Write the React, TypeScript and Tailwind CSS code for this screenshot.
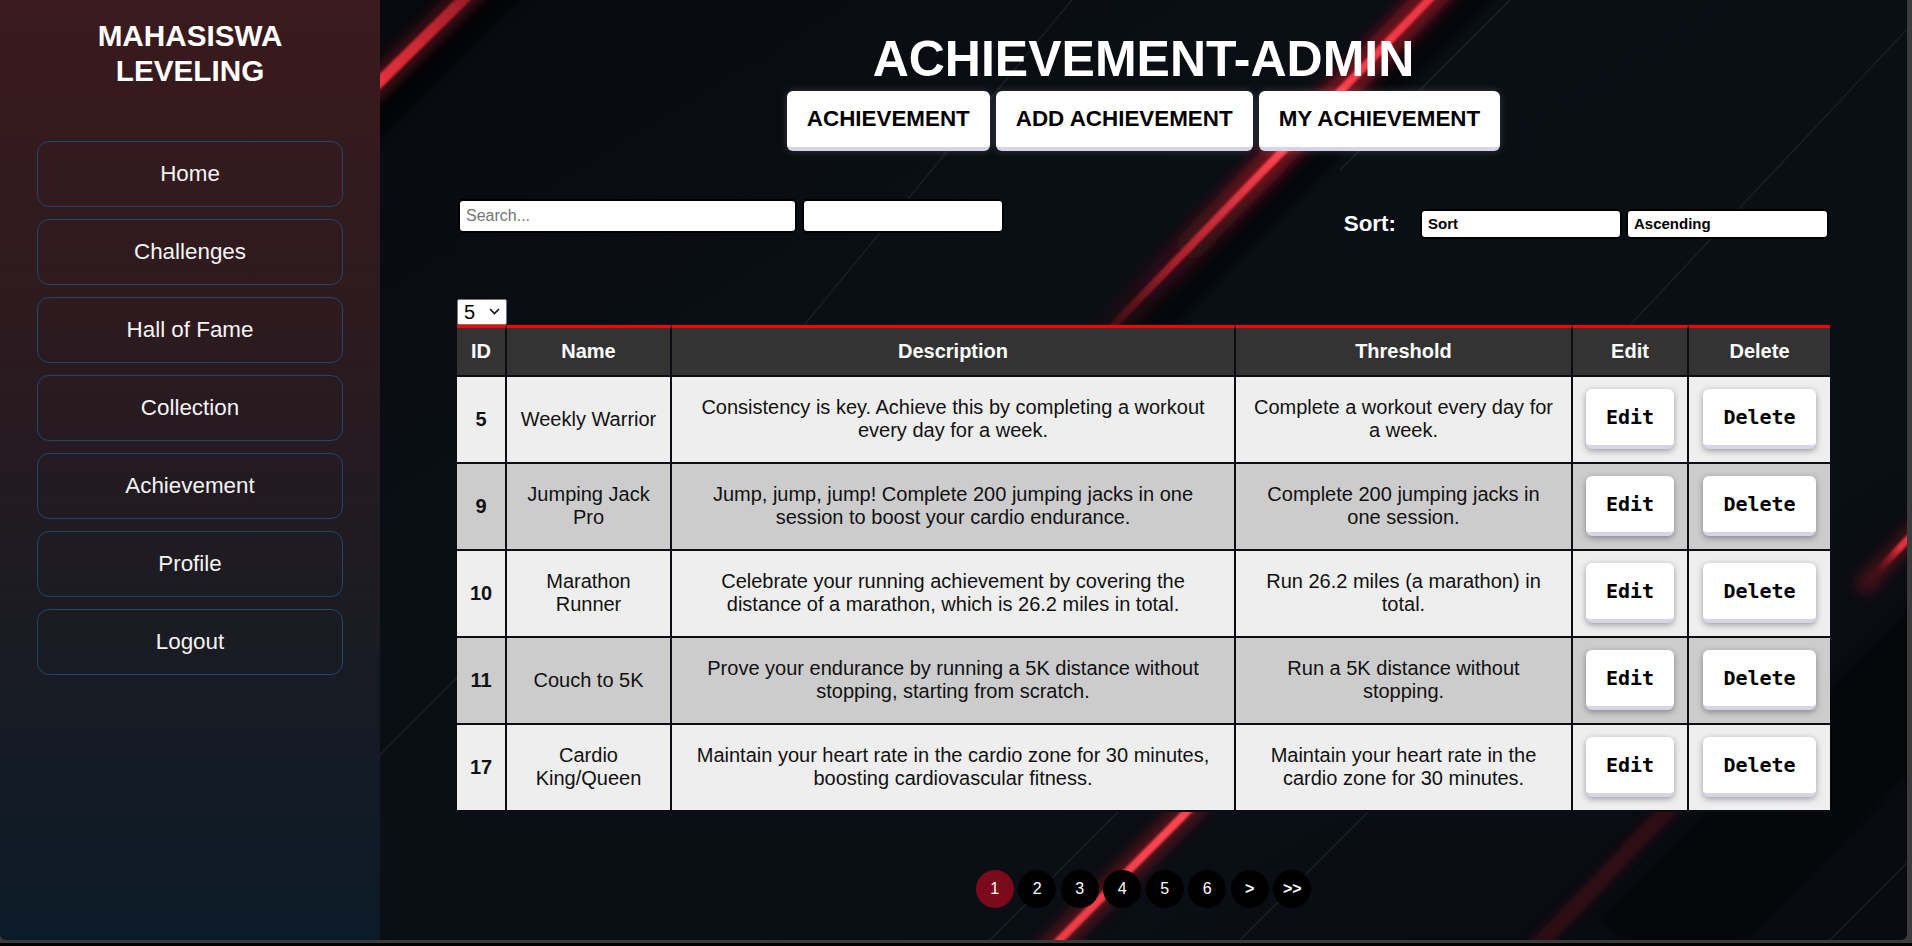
import React from "react";

type Row = { id: number; name: string; desc: string; thr: string };

const rows: Row[] = [
  {
    id: 5,
    name: "Weekly Warrior",
    desc: "Consistency is key. Achieve this by completing a workout every day for a week.",
    thr: "Complete a workout every day for a week.",
  },
  {
    id: 9,
    name: "Jumping Jack Pro",
    desc: "Jump, jump, jump! Complete 200 jumping jacks in one session to boost your cardio endurance.",
    thr: "Complete 200 jumping jacks in one session.",
  },
  {
    id: 10,
    name: "Marathon Runner",
    desc: "Celebrate your running achievement by covering the distance of a marathon, which is 26.2 miles in total.",
    thr: "Run 26.2 miles (a marathon) in total.",
  },
  {
    id: 11,
    name: "Couch to 5K",
    desc: "Prove your endurance by running a 5K distance without stopping, starting from scratch.",
    thr: "Run a 5K distance without stopping.",
  },
  {
    id: 17,
    name: "Cardio King/Queen",
    desc: "Maintain your heart rate in the cardio zone for 30 minutes, boosting cardiovascular fitness.",
    thr: "Maintain your heart rate in the cardio zone for 30 minutes.",
  },
];

const navItems = ["Home", "Challenges", "Hall of Fame", "Collection", "Achievement", "Profile", "Logout"];

function Sidebar() {
  return (
    <aside className="w-[380px] h-full shrink-0 flex flex-col items-center pt-[19px] bg-[linear-gradient(180deg,#3a1a1d_0%,#2c1a1f_35%,#1d1b22_62%,#0b1b28_100%)]">
      <h1 className="text-white font-bold text-[29.7px] leading-[34.5px] text-center">
        MAHASISWA
        <br />
        LEVELING
      </h1>
      <nav className="mt-[53px] flex flex-col gap-[12px]">
        {navItems.map((n) => (
          <a
            key={n}
            className="w-[306px] h-[66px] rounded-[12px] border border-[#21466e] flex items-center justify-center text-[22.4px] text-[#f4f4f4]"
          >
            {n}
          </a>
        ))}
      </nav>
    </aside>
  );
}

function Backdrop() {
  return (
    <svg className="absolute inset-0" width="1527" height="940" viewBox="0 0 1527 940">
      <defs>
        <filter id="glow" x="-50%" y="-50%" width="200%" height="200%">
          <feGaussianBlur stdDeviation="7" />
        </filter>
        <filter id="soft" x="-50%" y="-50%" width="200%" height="200%">
          <feGaussianBlur stdDeviation="1.2" />
        </filter>
        <filter id="wide" x="-50%" y="-50%" width="200%" height="200%">
          <feGaussianBlur stdDeviation="5" />
        </filter>
        <linearGradient id="gA" gradientUnits="userSpaceOnUse" x1="-20" y1="101" x2="100" y2="-17">
          <stop offset="0" stopColor="#f0343f" />
          <stop offset="0.45" stopColor="#d02a35" />
          <stop offset="1" stopColor="#8e1a24" />
        </linearGradient>
        <linearGradient id="gB" gradientUnits="userSpaceOnUse" x1="1068" y1="-20" x2="700" y2="360">
          <stop offset="0" stopColor="#e8343f" />
          <stop offset="0.45" stopColor="#ff4550" />
          <stop offset="0.75" stopColor="#c0242f" stopOpacity="0.8" />
          <stop offset="1" stopColor="#7a1019" stopOpacity="0" />
        </linearGradient>
        <linearGradient id="gBg" gradientUnits="userSpaceOnUse" x1="1068" y1="-20" x2="700" y2="360">
          <stop offset="0" stopColor="#a3141f" stopOpacity="0.7" />
          <stop offset="0.5" stopColor="#a3141f" stopOpacity="0.7" />
          <stop offset="1" stopColor="#5a0c12" stopOpacity="0" />
        </linearGradient>
        <linearGradient id="gC" gradientUnits="userSpaceOnUse" x1="900" y1="718" x2="620" y2="1000">
          <stop offset="0" stopColor="#e0303c" stopOpacity="0.3" />
          <stop offset="0.35" stopColor="#ff4652" />
          <stop offset="1" stopColor="#e0343f" />
        </linearGradient>
        <linearGradient id="gD" gradientUnits="userSpaceOnUse" x1="1560" y1="505" x2="1480" y2="590">
          <stop offset="0" stopColor="#ff4652" />
          <stop offset="0.5" stopColor="#e0303c" />
          <stop offset="0.8" stopColor="#a0141f" stopOpacity="0" />
        </linearGradient>
        <linearGradient id="shade" x1="0" y1="0" x2="1" y2="1">
          <stop offset="0" stopColor="#05070b" stopOpacity="0.7" />
          <stop offset="0.5" stopColor="#0c1119" stopOpacity="0" />
          <stop offset="1" stopColor="#05070a" stopOpacity="0.5" />
        </linearGradient>
      </defs>

      <rect x="0" y="0" width="1527" height="940" fill="url(#shade)" />

      {/* dark shadow bands */}
      <line x1="-10" y1="130" x2="140" y2="-20" stroke="#020305" strokeWidth="26" opacity="0.6" filter="url(#wide)" />
      <line x1="1110" y1="-20" x2="740" y2="360" stroke="#020305" strokeWidth="30" opacity="0.5" filter="url(#wide)" />
      <line x1="1600" y1="620" x2="1260" y2="960" stroke="#020305" strokeWidth="120" opacity="0.45" filter="url(#wide)" />

      {/* faint thin lines */}
      <g stroke="#ffffff" strokeOpacity="0.07" strokeWidth="1.5" fill="none">
        <line x1="700" y1="-10" x2="280" y2="500" />
        <line x1="1545" y1="10" x2="1180" y2="400" />
        <line x1="750" y1="800" x2="600" y2="950" />
        <line x1="1000" y1="800" x2="850" y2="950" />
        <line x1="1560" y1="830" x2="1440" y2="950" />
        <line x1="110" y1="645" x2="-20" y2="775" />
        <line x1="1140" y1="-10" x2="960" y2="170" />
      </g>

      {/* streak A top-left */}
      <line x1="-20" y1="101" x2="100" y2="-17" stroke="#a3141f" strokeWidth="22" opacity="0.45" filter="url(#glow)" />
      <line x1="-20" y1="101" x2="100" y2="-17" stroke="url(#gA)" strokeWidth="11" filter="url(#soft)" />

      {/* streak B main */}
      <line x1="1068" y1="-20" x2="700" y2="360" stroke="url(#gBg)" strokeWidth="30" filter="url(#glow)" />
      <line x1="1068" y1="-20" x2="700" y2="360" stroke="url(#gB)" strokeWidth="8" filter="url(#soft)" />

      {/* streak E dark red */}
      <line x1="1340" y1="755" x2="1130" y2="975" stroke="#3e1118" strokeWidth="16" opacity="0.8" filter="url(#wide)" />

      {/* streak C bottom */}
      <line x1="900" y1="718" x2="620" y2="1000" stroke="#a3141f" strokeWidth="24" opacity="0.5" filter="url(#glow)" />
      <line x1="900" y1="718" x2="620" y2="1000" stroke="url(#gC)" strokeWidth="8" filter="url(#soft)" />

      {/* streak D right edge */}
      <line x1="1560" y1="505" x2="1480" y2="590" stroke="#a3141f" strokeWidth="18" opacity="0.4" filter="url(#glow)" />
      <line x1="1560" y1="505" x2="1480" y2="590" stroke="url(#gD)" strokeWidth="7" filter="url(#soft)" />
    </svg>
  );
}

function TabButton({ label }: { label: string }) {
  return (
    <button className="h-[60px] px-5 bg-white rounded-[6px] border-b-4 border-[#d5d4e8] text-black font-bold text-[22.4px] shadow-[0_0_8px_rgba(255,255,255,0.18)]">
      {label}
    </button>
  );
}

function ActionButton({ label }: { label: string }) {
  return (
    <button className="h-[60px] px-5 bg-white rounded-[6px] border-b-4 border-[#d5d4e8] text-black font-bold text-[20px] font-['DejaVu_Sans_Mono',monospace] shadow-[0_2px_6px_rgba(0,0,0,0.35)]">
      {label}
    </button>
  );
}

function Table() {
  const cols = "grid grid-cols-[50px_165px_564px_337px_116px_141px]";
  const heads = ["ID", "Name", "Description", "Threshold", "Edit", "Delete"];
  return (
    <div className="w-[1373px]">
      <div className={cols}>
        {heads.map((h, i) => (
          <div
            key={h}
            className={`bg-[#333333] text-white font-bold text-[20px] leading-[23px] py-3 text-center border-t-[3px] border-t-[#ff0000] border-b-2 border-b-[#0b0d12] ${
              i < 5 ? "border-r-2 border-r-[#0b0d12]" : ""
            }`}
          >
            {h}
          </div>
        ))}
      </div>
      {rows.map((r, idx) => {
        const bg = idx % 2 === 0 ? "bg-[#eeeeee]" : "bg-[#cccccc]";
        const cell = `${bg} h-[87px] border-b-2 border-b-[#0b0d12] flex items-center justify-center text-center px-3 text-[20px] leading-[23px] text-[#111111]`;
        const br = "border-r-2 border-r-[#0b0d12]";
        return (
          <div key={r.id} className={cols}>
            <div className={`${cell} ${br} font-bold`}>{r.id}</div>
            <div className={`${cell} ${br}`}>{r.name}</div>
            <div className={`${cell} ${br}`}>{r.desc}</div>
            <div className={`${cell} ${br}`}>{r.thr}</div>
            <div className={`${cell} ${br}`}>
              <ActionButton label="Edit" />
            </div>
            <div className={`${cell}`}>
              <ActionButton label="Delete" />
            </div>
          </div>
        );
      })}
    </div>
  );
}

function Pagination() {
  const items = ["1", "2", "3", "4", "5", "6", ">", ">>"];
  return (
    <div className="mt-[58px] flex gap-[4.5px]">
      {items.map((p, i) => (
        <div
          key={p}
          className={`w-[38px] h-[38px] rounded-full flex items-center justify-center text-white text-[16px] ${
            i === 0 ? "bg-[#7d0a1a]" : "bg-black"
          } ${i >= 6 ? "font-bold" : ""}`}
        >
          {p}
        </div>
      ))}
    </div>
  );
}

function Main() {
  return (
    <main className="relative flex-1 h-full bg-[#0a0e15] overflow-hidden">
      <Backdrop />
      <div className="relative flex flex-col items-center pt-[30px]">
        <h2 className="text-white font-bold text-[50px] leading-[58px]">ACHIEVEMENT-ADMIN</h2>
        <div className="mt-[3px] flex gap-[6px]">
          <TabButton label="ACHIEVEMENT" />
          <TabButton label="ADD ACHIEVEMENT" />
          <TabButton label="MY ACHIEVEMENT" />
        </div>

        <div className="w-[1373px] mt-[48px] flex justify-between items-start">
          <div className="flex gap-[5px] pl-[1px]">
            <input
              placeholder="Search..."
              className="w-[339px] h-[34px] rounded-[5px] border-2 border-black bg-white px-[6px] text-[16px] text-black placeholder:text-[#757575] outline-none"
            />
            <input className="w-[202px] h-[34px] rounded-[5px] border-2 border-black bg-white px-[6px] text-[16px] outline-none" />
          </div>
          <div className="flex items-center mt-[8px] pr-[1px]">
            <span className="text-white font-bold text-[22.4px] mr-[24px]">Sort:</span>
            <div className="w-[202px] h-[30px] rounded-[5px] border-2 border-black bg-white flex items-center px-[6px] text-[15px] font-bold text-black">
              Sort
            </div>
            <div className="ml-[4px] w-[203px] h-[30px] rounded-[5px] border-2 border-black bg-white flex items-center px-[6px] text-[15px] font-bold text-black">
              Ascending
            </div>
          </div>
        </div>

        <div className="w-[1373px] mt-[58px]">
          <div className="w-[50px] h-[26px] bg-white border border-[#767676] rounded-[2px] flex items-center justify-between pl-[6px] pr-[6px] text-[20px] leading-none text-black">
            <span>5</span>
            <svg width="11" height="7" viewBox="0 0 11 7">
              <path d="M1 1 L5.5 5.5 L10 1" stroke="#111" strokeWidth="1.6" fill="none" />
            </svg>
          </div>
        </div>

        <Table />
        <Pagination />
      </div>
    </main>
  );
}

export default function App() {
  return (
    <div className="w-[1912px] h-[946px] bg-[#3b3b3b] border-b-[3px] border-black overflow-hidden font-['Liberation_Sans',Arial,sans-serif]">
      <div className="flex w-[1907px] h-[940px] rounded-b-[6px] overflow-hidden">
        <Sidebar />
        <Main />
      </div>
    </div>
  );
}
